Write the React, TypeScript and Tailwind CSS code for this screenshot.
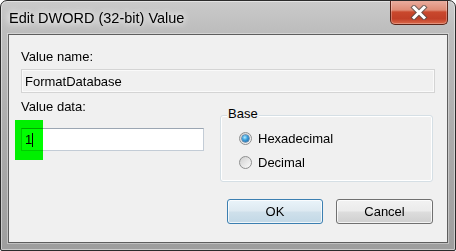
import React from 'react';

const CloseButton: React.FC = () => (
  <div className="ml-auto mr-[7px] -mt-px w-[58px] h-[25px] shrink-0 rounded-b-[5px] border border-t-0 border-[#5b2418] bg-[linear-gradient(180deg,#eab0a2_0%,#df8c76_42%,#c9482d_50%,#c13f27_78%,#db6a4b_100%)] shadow-[inset_0_0_0_1px_rgba(255,255,255,0.28)] flex items-center justify-center">
    <svg width="18" height="15" viewBox="0 0 18 15">
      {/* dark outline first, white stroke over it */}
      <path d="M4 2.5 L14 12.5 M14 2.5 L4 12.5" stroke="#4e4e4e" strokeWidth="5" strokeLinecap="square" fill="none" opacity="0.75" />
      <path d="M4 2.5 L14 12.5 M14 2.5 L4 12.5" stroke="#ffffff" strokeWidth="3" strokeLinecap="square" fill="none" />
    </svg>
  </div>
);

interface RadioProps {
  label: string;
  checked?: boolean;
}

const Radio: React.FC<RadioProps> = ({ label, checked }) => (
  <div className="flex items-center h-[15px]">
    <div className="w-[13px] h-[13px] shrink-0 rounded-full border border-[#8e8f8f] bg-[linear-gradient(135deg,#cfcfcf_0%,#e8e8e8_55%,#fbfbfb_100%)] flex items-center justify-center">
      {checked && (
        <div className="w-[7px] h-[7px] rounded-full bg-[radial-gradient(circle_at_40%_35%,#b5ecff_0%,#3ea3df_40%,#14528f_100%)] shadow-[0_0_0_0.5px_#1c4f82]" />
      )}
    </div>
    <span className="ml-[6px]">{label}</span>
  </div>
);

export default function App() {
  return (
    <div className="w-[456px] h-[251px] bg-white font-['Liberation_Sans',Arial,sans-serif] text-black">
      <div className="flex flex-col w-full h-full rounded-t-[7px] rounded-b-[2px] border border-[#2b2b2b] bg-[linear-gradient(180deg,#cacaca_0%,#bdbdbd_12%,#ababab_55%,#9e9e9e_100%)] shadow-[inset_0_0_0_1px_rgba(255,255,255,0.45)] overflow-hidden">
        {/* Title bar */}
        <div className="h-[33px] flex items-start shrink-0">
          <span className="mt-[8px] ml-[8px] text-[14.5px] leading-[18px] [text-shadow:0_0_6px_#fff,0_0_10px_#fff]">
            Edit DWORD (32-bit) Value
          </span>
          <CloseButton />
        </div>

        {/* Client area */}
        <div className="flex-1 mx-[7px] mb-[7px] border border-[#5e5e5e] bg-[#f0f0f0] shadow-[0_0_0_1px_rgba(255,255,255,0.35)] px-[12px] text-[13px] leading-[15px]">
          <p className="mt-[14px]">Value name:</p>
          <div className="mt-[5px] h-[24px] border border-[#d4d4d4] shadow-[inset_0_0_0_1px_#fafafa] flex items-center pl-[3px]">
            FormatDatabase
          </div>

          <div className="mt-[6px] flex items-start">
            {/* Value data */}
            <div className="w-[183px] shrink-0">
              <p>Value data:</p>
              <div className="relative mt-[14px] h-[23px] border border-[#c3ccd6] border-t-[#9ba6b3] bg-white flex items-center pl-[3px]">
                <span>1</span>
                <span className="w-px h-[14px] bg-black" />
                {/* green highlight */}
                <div className="absolute -left-[7px] -top-[9px] w-[28px] h-[40px] bg-[#00ff00] mix-blend-multiply" />
              </div>
            </div>

            {/* Base group */}
            <div className="relative ml-[16px] mt-[16px] w-[213px] h-[67px] border border-[#d5dfe5] rounded-[3px] shadow-[inset_0_0_0_1px_#ffffff]">
              <span className="absolute left-[6px] -top-[10px] px-px bg-[#f0f0f0]">Base</span>
              <div className="pl-[18px] pt-[15px] flex flex-col gap-[9px]">
                <Radio label="Hexadecimal" checked />
                <Radio label="Decimal" />
              </div>
            </div>
          </div>

          {/* Buttons */}
          <div className="mt-[17px] pr-[2px] flex justify-end gap-[13px]">
            <button className="w-[96px] h-[25px] rounded-[3px] border border-[#3c7fb1] bg-[linear-gradient(180deg,#eaf4fa_0%,#dde9f1_48%,#cfe0eb_52%,#c2d8e6_100%)] shadow-[inset_0_0_0_1px_rgba(255,255,255,0.75)]">
              OK
            </button>
            <button className="w-[97px] h-[25px] rounded-[3px] border border-[#707070] bg-[linear-gradient(180deg,#f2f2f2_0%,#ebebeb_48%,#dddddd_52%,#cfcfcf_100%)] shadow-[inset_0_0_0_1px_rgba(255,255,255,0.75)]">
              Cancel
            </button>
          </div>
        </div>
      </div>
    </div>
  );
}
